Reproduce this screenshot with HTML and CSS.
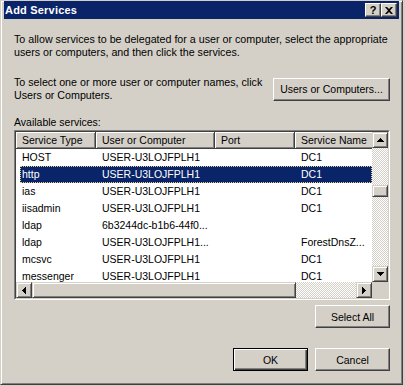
FILE: index.html
```html
<!DOCTYPE html>
<html lang="en">
<head>
  <meta charset="UTF-8" />
  <title>Add Services</title>
  <link rel="stylesheet" href="styles.css">
</head>
<body>
  <div class="window">
    <div class="titlebar">
      <span class="title">Add Services</span>
      <div class="caption-btns">
        <button class="cap-btn help">?</button>
        <button class="cap-btn">
          <svg width="8" height="7" viewBox="0 0 8 7"><path d="M0 0h2l2 2 2-2h2L5 3.5 8 7H6L4 5 2 7H0l3-3.5z" fill="#000"/></svg>
        </button>
      </div>
    </div>

    <div class="content">
      <p class="intro">To allow services to be delegated for a user or computer, select the appropriate<br>users or computers, and then click the services.</p>

      <div class="pick-row">
        <p>To select one or more user or computer names, click<br>Users or Computers.</p>
        <button class="btn btn-users">Users or Computers...</button>
      </div>

      <div class="label">Available services:</div>

      <div class="listview">
        <div class="lv-inner">
          <div class="lv-body">
            <div class="lv-header">
              <div class="col c1">Service Type</div>
              <div class="col c2">User or Computer</div>
              <div class="col c3">Port</div>
              <div class="col c4">Service Name</div>
            </div>
            <div class="lv-row"><div class="cell c1">HOST</div><div class="cell c2">USER-U3LOJFPLH1</div><div class="cell c3"></div><div class="cell c4">DC1</div></div>
            <div class="lv-row sel"><div class="cell c1">http</div><div class="cell c2">USER-U3LOJFPLH1</div><div class="cell c3"></div><div class="cell c4">DC1</div></div>
            <div class="lv-row"><div class="cell c1">ias</div><div class="cell c2">USER-U3LOJFPLH1</div><div class="cell c3"></div><div class="cell c4">DC1</div></div>
            <div class="lv-row"><div class="cell c1">iisadmin</div><div class="cell c2">USER-U3LOJFPLH1</div><div class="cell c3"></div><div class="cell c4">DC1</div></div>
            <div class="lv-row"><div class="cell c1">ldap</div><div class="cell c2">6b3244dc-b1b6-44f0...</div><div class="cell c3"></div><div class="cell c4"></div></div>
            <div class="lv-row"><div class="cell c1">ldap</div><div class="cell c2">USER-U3LOJFPLH1...</div><div class="cell c3"></div><div class="cell c4">ForestDnsZ...</div></div>
            <div class="lv-row"><div class="cell c1">mcsvc</div><div class="cell c2">USER-U3LOJFPLH1</div><div class="cell c3"></div><div class="cell c4">DC1</div></div>
            <div class="lv-row"><div class="cell c1">messenger</div><div class="cell c2">USER-U3LOJFPLH1</div><div class="cell c3"></div><div class="cell c4">DC1</div></div>
          </div>

          <div class="vscroll">
            <div class="sb-btn"><svg width="7" height="4" viewBox="0 0 7 4"><path d="M0 3h7v1H0zM1 2h5v1H1zM2 1h3v1H2zM3 0h1v1H3z"/></svg></div>
            <div class="track v-top"></div>
            <div class="thumb v-thumb"></div>
            <div class="track grow"></div>
            <div class="sb-btn"><svg width="7" height="4" viewBox="0 0 7 4"><path d="M0 0h7v1H0zM1 1h5v1H1zM2 2h3v1H2zM3 3h1v1H3z"/></svg></div>
          </div>

          <div class="hscroll">
            <div class="sb-btn"><svg width="4" height="7" viewBox="0 0 4 7"><path d="M3 0h1v7H3zM2 1h1v5H2zM1 2h1v3H1zM0 3h1v1H0z"/></svg></div>
            <div class="thumb h-thumb"></div>
            <div class="track grow"></div>
            <div class="sb-btn"><svg width="4" height="7" viewBox="0 0 4 7"><path d="M0 0h1v7H0zM1 1h1v5H1zM2 2h1v3H2zM3 3h1v1H3z"/></svg></div>
          </div>

          <div class="corner"></div>
        </div>
      </div>

      <div class="btn-row select-row">
        <button class="btn">Select All</button>
      </div>

      <div class="btn-row footer">
        <button class="btn default">OK</button>
        <button class="btn">Cancel</button>
      </div>
    </div>
  </div>
</body>
</html>
```

FILE: styles.css
```css
body { margin: 0; background: #d4d0c8; font-family: Tahoma, "Liberation Sans", sans-serif; font-size: 10.5px; color: #000; }

/* window frame */
.window {
  width: 403px; height: 385px; box-sizing: border-box;
  display: flex; flex-direction: column;
  background: #d4d0c8;
  border-top: 1px solid #d4d0c8; border-left: 1px solid #d4d0c8;
  border-right: 1px solid #404040; border-bottom: 1px solid #404040;
  box-shadow: inset 1px 1px #fff, inset -1px -1px #808080;
  padding: 0 3px 3px 3px;
}

.titlebar { height: 18px; flex: none; background: #0a246a; color: #fff; display: flex; align-items: center; justify-content: space-between; padding: 0 2px 0 1px; }
.title { font-weight: bold; font-size: 11px; letter-spacing: 0.2px; }
.caption-btns { display: flex; }
.cap-btn {
  width: 16px; height: 14px; box-sizing: border-box; padding: 0; margin: 0;
  background: #d4d0c8; border: 1px solid; border-color: #fff #404040 #404040 #fff;
  box-shadow: inset -1px -1px #808080;
  display: flex; align-items: center; justify-content: center;
}
.cap-btn.help { font-family: "Liberation Sans", sans-serif; font-weight: bold; font-size: 11px; line-height: 12px; color: #000; padding-bottom: 1px; }

.content { flex: 1; display: flex; flex-direction: column; padding: 14px 9px 0 10px; }
.content p { margin: 0; font-size: 10.7px; line-height: 13px; white-space: nowrap; }

.pick-row { display: flex; align-items: center; justify-content: space-between; margin-top: 17px; }

/* buttons */
.btn {
  height: 23px; width: 75px; box-sizing: border-box; padding: 0;
  font-family: inherit; font-size: 10.5px; color: #000;
  background: #d4d0c8; border: 1px solid; border-color: #fff #404040 #404040 #fff;
  box-shadow: inset -1px -1px #808080;
}
.btn-users { width: 117px; }
.btn.default { border-color: #000; box-shadow: inset 1px 1px #fff, inset -1px -1px #404040, inset -2px -2px #808080; }
.btn-row { display: flex; justify-content: flex-end; gap: 7px; }
.select-row { margin-top: 5px; }
.footer { margin-top: 20px; }

.label { margin-top: 14px; line-height: 13px; }

/* list view */
.listview { margin-top: 1px; border: 1px solid; border-color: #808080 #fff #fff #808080; }
.lv-inner {
  border: 1px solid; border-color: #404040 #d4d0c8 #d4d0c8 #404040;
  display: grid; grid-template-columns: 356px 16px; grid-template-rows: 150px 16px;
}
.lv-body { background: #fff; overflow: hidden; }
.lv-header { display: flex; height: 17px; }
.col {
  flex: none; box-sizing: border-box; height: 17px; line-height: 16px; padding-left: 6px;
  border-right: 1px solid #404040; border-bottom: 1px solid #404040;
  box-shadow: inset 1px 1px #fff, inset -1px -1px #808080;
  background: #d4d0c8; white-space: nowrap; overflow: hidden;
}
.c1 { width: 80px; }
.c2 { width: 119px; }
.c3 { width: 80px; }
.c4 { width: 100px; }

.lv-row { display: flex; height: 17px; line-height: 17px; margin-left: 4px; }
.cell { flex: none; box-sizing: border-box; padding-left: 6px; white-space: nowrap; overflow: hidden; }
.lv-row .c1 { width: 76px; padding-left: 2px; }
.lv-row.sel { background: #0a246a; color: #fff; outline: 1px dotted #e8d08a; outline-offset: -1px; width: 352px; }

/* scroll bars */
.vscroll { display: flex; flex-direction: column; }
.hscroll { display: flex; }
.sb-btn, .thumb {
  box-sizing: border-box; background: #d4d0c8;
  border: 1px solid; border-color: #d4d0c8 #404040 #404040 #d4d0c8;
  box-shadow: inset 1px 1px #fff, inset -1px -1px #808080;
}
.sb-btn { width: 16px; height: 16px; flex: none; display: flex; align-items: center; justify-content: center; }
.sb-btn svg { fill: #000; }
.track { background-color: #fff; background-image: repeating-conic-gradient(#d4d0c8 0 25%, #fff 0 50%); background-size: 2px 2px; }
.grow { flex: 1; }
.v-top { height: 37px; flex: none; }
.v-thumb { height: 12px; flex: none; }
.h-thumb { width: 264px; flex: none; }
.corner { background: #d4d0c8; }
```
